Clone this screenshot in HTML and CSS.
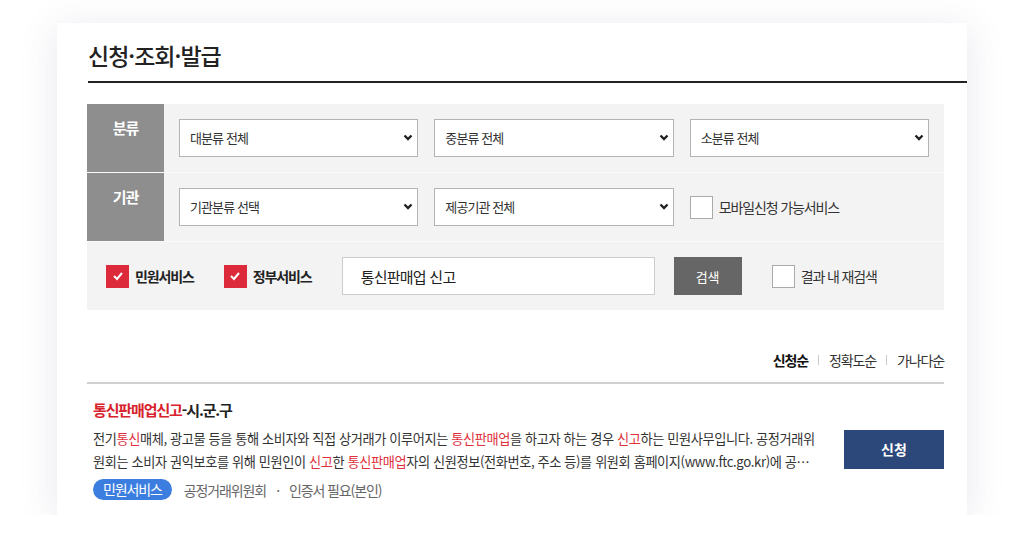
FILE: index.html
```html
<!DOCTYPE html>
<html lang="ko">
<head>
    <meta charset="UTF-8">
    <meta name="viewport" content="width=device-width, initial-scale=1.0">
    <title>신청·조회·발급</title>
    <link rel="stylesheet" href="styles.css">
</head>
<body>
    <div class="card">
        <div class="card-head">
            <h2>신청·조회·발급</h2>
        </div>
        <div class="card-body">
            <div class="filter">
                <div class="filter-row">
                    <div class="filter-label">분류</div>
                    <div class="filter-fields">
                        <div class="select-box">
                            <select><option>대분류 전체</option></select>
                            <svg class="arrow" width="10" height="7" viewBox="0 0 10 7"><path d="M1.5 1.5L5 5L8.5 1.5" fill="none" stroke="#222" stroke-width="2.4"/></svg>
                        </div>
                        <div class="select-box">
                            <select><option>중분류 전체</option></select>
                            <svg class="arrow" width="10" height="7" viewBox="0 0 10 7"><path d="M1.5 1.5L5 5L8.5 1.5" fill="none" stroke="#222" stroke-width="2.4"/></svg>
                        </div>
                        <div class="select-box">
                            <select><option>소분류 전체</option></select>
                            <svg class="arrow" width="10" height="7" viewBox="0 0 10 7"><path d="M1.5 1.5L5 5L8.5 1.5" fill="none" stroke="#222" stroke-width="2.4"/></svg>
                        </div>
                    </div>
                </div>
                <div class="filter-row">
                    <div class="filter-label">기관</div>
                    <div class="filter-fields">
                        <div class="select-box">
                            <select><option>기관분류 선택</option></select>
                            <svg class="arrow" width="10" height="7" viewBox="0 0 10 7"><path d="M1.5 1.5L5 5L8.5 1.5" fill="none" stroke="#222" stroke-width="2.4"/></svg>
                        </div>
                        <div class="select-box">
                            <select><option>제공기관 전체</option></select>
                            <svg class="arrow" width="10" height="7" viewBox="0 0 10 7"><path d="M1.5 1.5L5 5L8.5 1.5" fill="none" stroke="#222" stroke-width="2.4"/></svg>
                        </div>
                        <label class="check">
                            <span class="box"></span>
                            <span class="check-text">모바일신청 가능서비스</span>
                        </label>
                    </div>
                </div>
                <div class="filter-search">
                    <label class="check checked bold">
                        <span class="box"><svg width="12" height="10" viewBox="0 0 12 10"><path d="M2 5L5 8L10 2" fill="none" stroke="#fff" stroke-width="2"/></svg></span>
                        <span class="check-text">민원서비스</span>
                    </label>
                    <label class="check checked bold">
                        <span class="box"><svg width="12" height="10" viewBox="0 0 12 10"><path d="M2 5L5 8L10 2" fill="none" stroke="#fff" stroke-width="2"/></svg></span>
                        <span class="check-text">정부서비스</span>
                    </label>
                    <input type="text" class="search-input" value="통신판매업 신고">
                    <button class="search-btn">검색</button>
                    <label class="check">
                        <span class="box"></span>
                        <span class="check-text">결과 내 재검색</span>
                    </label>
                </div>
            </div>

            <div class="sort">
                <a class="active">신청순</a>
                <span class="sep"></span>
                <a>정확도순</a>
                <span class="sep"></span>
                <a>가나다순</a>
            </div>

            <div class="result">
                <div class="result-info">
                    <div class="result-title"><em>통신판매업신고</em>-시.군.구</div>
                    <p class="result-desc">전기<em>통신</em>매체, 광고물 등을 통해 소비자와 직접 상거래가 이루어지는 <em>통신판매업</em>을 하고자 하는 경우 <em>신고</em>하는 민원사무입니다. 공정거래위원회는 소비자 권익보호를 위해 민원인이 <em>신고</em>한 <em>통신판매업</em>자의 신원정보(전화번호, 주소 등)를 위원회 홈페이지(www.ftc.go.kr)에 공개하고 있습니다.</p>
                    <div class="result-meta">
                        <span class="pill">민원서비스</span>
                        <span>공정거래위원회</span>
                        <span class="dot">·</span>
                        <span>인증서 필요(본인)</span>
                    </div>
                </div>
                <button class="apply-btn">신청</button>
            </div>
        </div>
    </div>
</body>
</html>
```

FILE: styles.css
```css
body {
    margin: 0;
    background-color: #fff;
    font-family: "Noto Sans CJK KR", "Noto Sans", sans-serif;
    color: #333;
    letter-spacing: -0.07em;
}
.card {
    width: 910px;
    margin: 23px auto 0;
    background-color: #fff;
    box-shadow: 0 6px 36px rgba(70,70,120,0.13);
    padding-bottom: 15px;
}
.card-head {
    margin-left: 31px;
    padding: 18px 0 12px;
    border-bottom: 2px solid #222;
}
.card-head h2 {
    margin: 0;
    font-size: 23px;
    line-height: 28px;
    font-weight: 500;
    color: #222;
    letter-spacing: -1px;
}
.card-body {
    padding: 21px 23px 0 30px;
}
.filter {
    background-color: #f3f3f3;
}
.filter-row {
    display: flex;
    border-bottom: 1px solid #fafafa;
}
.filter-label {
    width: 77px;
    flex-shrink: 0;
    background-color: #8e8e8e;
    color: #fff;
    font-size: 15px;
    font-weight: bold;
    text-align: center;
    padding-top: 14px;
    line-height: 20px;
}
.filter-fields {
    flex: 1;
    display: grid;
    grid-template-columns: repeat(3, 1fr);
    gap: 16px;
    align-items: center;
    padding: 15px;
}
.select-box {
    position: relative;
}
.select-box select {
    width: 100%;
    height: 38px;
    appearance: none;
    -webkit-appearance: none;
    border: 1px solid #b3b3b3;
    border-radius: 0;
    background-color: #fff;
    padding: 0 10px 2px;
    font-family: inherit;
    font-size: 13px;
    letter-spacing: -0.07em;
    color: #333;
}
.select-box .arrow {
    position: absolute;
    right: 5px;
    top: 15px;
}
.check {
    display: flex;
    align-items: center;
    font-size: 14px;
    color: #333;
}
.check .box {
    width: 21px;
    height: 21px;
    border: 1px solid #aaa;
    background-color: #fff;
    display: flex;
    align-items: center;
    justify-content: center;
    margin-right: 6px;
}
.check.checked .box {
    border-color: #dd2a3b;
    background-color: #dd2a3b;
}
.check.bold {
    font-weight: bold;
    color: #222;
}
.filter-search {
    display: flex;
    align-items: center;
    padding: 15px 0 15px 19px;
}
.filter-search .check {
    margin-right: 30px;
}
.search-input {
    width: 313px;
    height: 38px;
    box-sizing: border-box;
    border: 1px solid #ccc;
    padding: 0 18px;
    font-family: inherit;
    font-size: 15px;
    letter-spacing: -0.05em;
    color: #222;
    margin-right: 19px;
}
.search-btn {
    width: 68px;
    height: 38px;
    border: none;
    background-color: #666;
    color: #fff;
    font-family: inherit;
    font-size: 13px;
    margin-right: 30px;
}
.sort {
    display: flex;
    justify-content: flex-end;
    align-items: center;
    padding: 40px 0 12px;
    border-bottom: 2px solid #d0d0d0;
    font-size: 14px;
    line-height: 20px;
}
.sort a {
    color: #333;
}
.sort a.active {
    font-weight: bold;
    color: #111;
}
.sort .sep {
    width: 1px;
    height: 10px;
    background-color: #ccc;
    margin: 0 10px;
}
.result {
    display: flex;
    align-items: center;
    justify-content: space-between;
    padding: 16px 0 0 6px;
}
.result-info {
    width: 722px;
}
.result em {
    font-style: normal;
    color: #e0303c;
}
.result-title {
    font-size: 15px;
    font-weight: bold;
    line-height: 20px;
    color: #222;
}
.result-title em {
    color: #d7222c;
}
.result-desc {
    margin: 7px 0 0;
    font-size: 13.2px;
    letter-spacing: -0.03em;
    line-height: 23px;
    color: #333;
    display: -webkit-box;
    -webkit-line-clamp: 2;
    -webkit-box-orient: vertical;
    overflow: hidden;
}
.result-meta {
    display: flex;
    align-items: center;
    margin-top: 6px;
    font-size: 14px;
    color: #666;
}
.pill {
    background-color: #3c7ee0;
    color: #fff;
    height: 21px;
    line-height: 21px;
    padding: 0 10px;
    border-radius: 11px;
    margin-right: 12px;
}
.dot {
    margin: 0 10px;
}
.apply-btn {
    width: 100px;
    height: 39px;
    border: none;
    background-color: #2c477a;
    color: #fff;
    font-family: inherit;
    font-size: 14px;
    font-weight: bold;
    margin-bottom: 2px;
}
```
